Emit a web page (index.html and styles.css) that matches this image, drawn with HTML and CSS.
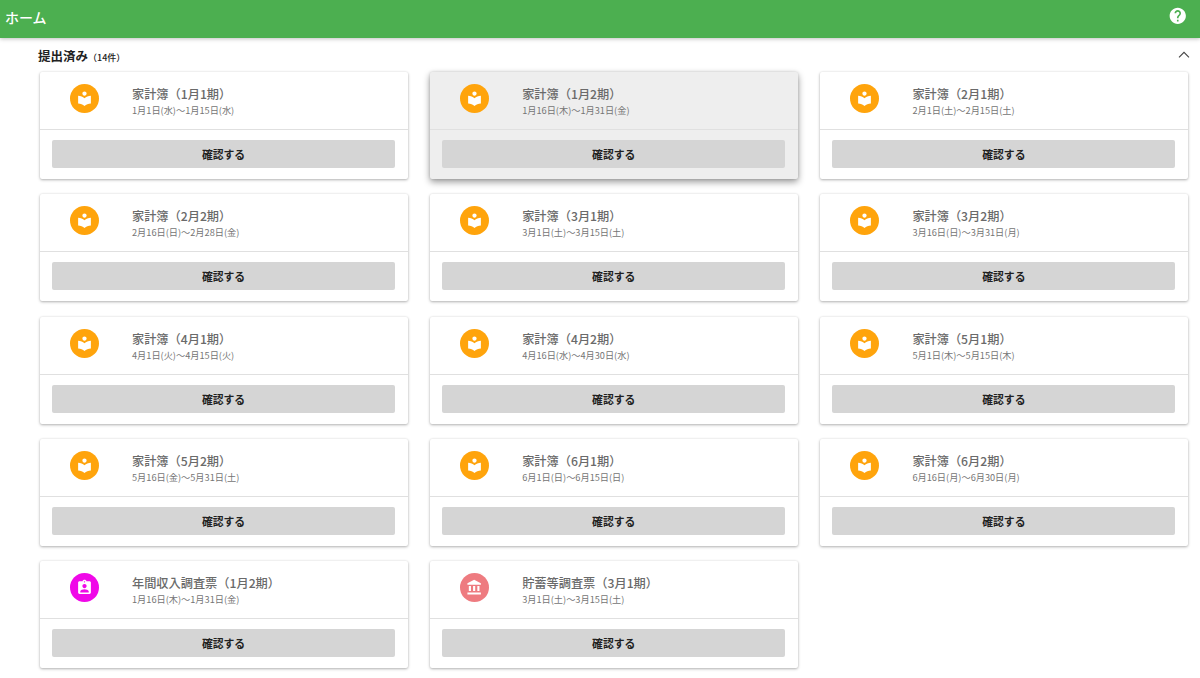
FILE: index.html
```html
<!DOCTYPE html>
<html lang="ja">
<head>
<meta charset="utf-8">
<title>ホーム</title>
<link rel="stylesheet" href="styles.css">
</head>
<body>
<svg class="defs" width="0" height="0" aria-hidden="true">
  <symbol id="i-book" viewBox="0 0 24 24"><path d="M12 11.55C9.64 9.35 6.48 8 3 8v11c3.48 0 6.64 1.35 9 3.55 2.36-2.19 5.52-3.55 9-3.55V8c-3.48 0-6.64 1.35-9 3.55zM12 8c1.66 0 3-1.34 3-3s-1.34-3-3-3-3 1.34-3 3 1.34 3 3 3z"/></symbol>
  <symbol id="i-ind" viewBox="0 0 24 24"><path d="M19 3h-4.18C14.4 1.84 13.3 1 12 1c-1.3 0-2.4.84-2.82 2H5c-1.1 0-2 .9-2 2v14c0 1.1.9 2 2 2h14c1.1 0 2-.9 2-2V5c0-1.1-.9-2-2-2zm-7 0c.55 0 1 .45 1 1s-.45 1-1 1-1-.45-1-1 .45-1 1-1zm0 4c1.66 0 3 1.34 3 3s-1.34 3-3 3-3-1.34-3-3 1.34-3 3-3zm6 12H6v-1.4c0-2 4-3.1 6-3.1s6 1.1 6 3.1V19z"/></symbol>
  <symbol id="i-bank" viewBox="0 0 24 24"><path d="M4 10v7h3v-7H4zm6 0v7h3v-7h-3zM2 22h19v-3H2v3zm14-12v7h3v-7h-3zm-4.5-9L2 6v2h19V6l-9.5-5z"/></symbol>
</svg>
<header class="appbar">
  <span class="appbar-title">ホーム</span>
  <svg class="help" viewBox="0 0 24 24"><path d="M12 2C6.48 2 2 6.48 2 12s4.48 10 10 10 10-4.48 10-10S17.52 2 12 2zm1 17h-2v-2h2v2zm2.07-7.75l-.9.92C13.45 12.9 13 13.5 13 15h-2v-.5c0-1.1.45-2.1 1.17-2.83l1.24-1.26c.37-.36.59-.86.59-1.41 0-1.1-.9-2-2-2s-2 .9-2 2H8c0-2.21 1.79-4 4-4s4 1.79 4 4c0 .88-.36 1.68-.93 2.25z"/></svg>
</header>
<main class="content">
  <div class="section-head">
    <h2 class="section-title">提出済み<small class="count">（14件）</small></h2>
    <svg class="chevron" viewBox="0 0 24 24"><path d="M4.5 15.5 12 8l7.5 7.5"/></svg>
  </div>
  <div class="grid">
    <article class="card"><div class="card-top"><span class="badge orange"><svg class="ico"><use href="#i-book"/></svg></span><div class="card-text"><div class="card-title">家計簿（1月1期）</div><div class="card-date">1月1日(水)〜1月15日(水)</div></div></div><div class="card-actions"><button class="confirm">確認する</button></div></article>
    <article class="card hover"><div class="card-top"><span class="badge orange"><svg class="ico"><use href="#i-book"/></svg></span><div class="card-text"><div class="card-title">家計簿（1月2期）</div><div class="card-date">1月16日(木)〜1月31日(金)</div></div></div><div class="card-actions"><button class="confirm">確認する</button></div></article>
    <article class="card"><div class="card-top"><span class="badge orange"><svg class="ico"><use href="#i-book"/></svg></span><div class="card-text"><div class="card-title">家計簿（2月1期）</div><div class="card-date">2月1日(土)〜2月15日(土)</div></div></div><div class="card-actions"><button class="confirm">確認する</button></div></article>
    <article class="card"><div class="card-top"><span class="badge orange"><svg class="ico"><use href="#i-book"/></svg></span><div class="card-text"><div class="card-title">家計簿（2月2期）</div><div class="card-date">2月16日(日)〜2月28日(金)</div></div></div><div class="card-actions"><button class="confirm">確認する</button></div></article>
    <article class="card"><div class="card-top"><span class="badge orange"><svg class="ico"><use href="#i-book"/></svg></span><div class="card-text"><div class="card-title">家計簿（3月1期）</div><div class="card-date">3月1日(土)〜3月15日(土)</div></div></div><div class="card-actions"><button class="confirm">確認する</button></div></article>
    <article class="card"><div class="card-top"><span class="badge orange"><svg class="ico"><use href="#i-book"/></svg></span><div class="card-text"><div class="card-title">家計簿（3月2期）</div><div class="card-date">3月16日(日)〜3月31日(月)</div></div></div><div class="card-actions"><button class="confirm">確認する</button></div></article>
    <article class="card"><div class="card-top"><span class="badge orange"><svg class="ico"><use href="#i-book"/></svg></span><div class="card-text"><div class="card-title">家計簿（4月1期）</div><div class="card-date">4月1日(火)〜4月15日(火)</div></div></div><div class="card-actions"><button class="confirm">確認する</button></div></article>
    <article class="card"><div class="card-top"><span class="badge orange"><svg class="ico"><use href="#i-book"/></svg></span><div class="card-text"><div class="card-title">家計簿（4月2期）</div><div class="card-date">4月16日(水)〜4月30日(水)</div></div></div><div class="card-actions"><button class="confirm">確認する</button></div></article>
    <article class="card"><div class="card-top"><span class="badge orange"><svg class="ico"><use href="#i-book"/></svg></span><div class="card-text"><div class="card-title">家計簿（5月1期）</div><div class="card-date">5月1日(木)〜5月15日(木)</div></div></div><div class="card-actions"><button class="confirm">確認する</button></div></article>
    <article class="card"><div class="card-top"><span class="badge orange"><svg class="ico"><use href="#i-book"/></svg></span><div class="card-text"><div class="card-title">家計簿（5月2期）</div><div class="card-date">5月16日(金)〜5月31日(土)</div></div></div><div class="card-actions"><button class="confirm">確認する</button></div></article>
    <article class="card"><div class="card-top"><span class="badge orange"><svg class="ico"><use href="#i-book"/></svg></span><div class="card-text"><div class="card-title">家計簿（6月1期）</div><div class="card-date">6月1日(日)〜6月15日(日)</div></div></div><div class="card-actions"><button class="confirm">確認する</button></div></article>
    <article class="card"><div class="card-top"><span class="badge orange"><svg class="ico"><use href="#i-book"/></svg></span><div class="card-text"><div class="card-title">家計簿（6月2期）</div><div class="card-date">6月16日(月)〜6月30日(月)</div></div></div><div class="card-actions"><button class="confirm">確認する</button></div></article>
    <article class="card"><div class="card-top"><span class="badge magenta"><svg class="ico"><use href="#i-ind"/></svg></span><div class="card-text"><div class="card-title">年間収入調査票（1月2期）</div><div class="card-date">1月16日(木)〜1月31日(金)</div></div></div><div class="card-actions"><button class="confirm">確認する</button></div></article>
    <article class="card"><div class="card-top"><span class="badge rose"><svg class="ico"><use href="#i-bank"/></svg></span><div class="card-text"><div class="card-title">貯蓄等調査票（3月1期）</div><div class="card-date">3月1日(土)〜3月15日(土)</div></div></div><div class="card-actions"><button class="confirm">確認する</button></div></article>
  </div>
</main>
</body>
</html>
```

FILE: styles.css
```css
* { box-sizing: border-box; }
html, body { margin: 0; padding: 0; }
body {
  width: 1200px;
  height: 678px;
  overflow: hidden;
  background: #fff;
  font-family: "Noto Sans CJK JP", "Noto Sans", sans-serif;
  color: #212121;
}
.defs { display: block; height: 0; }
.appbar {
  height: 38px;
  background: #4caf50;
  display: flex;
  align-items: center;
  justify-content: space-between;
  padding: 0 13px 5px 5px;
  box-shadow: 0 1px 4px rgba(0,0,0,.25);
  position: relative;
}
.appbar-title { color: #fff; font-size: 14px; font-weight: 500; }
.help { width: 19.5px; height: 19.5px; fill: #fff; margin-top: -1px; }
.content { padding: 0 12px 0 40px; }
.section-head {
  height: 34px;
  display: flex;
  align-items: center;
  justify-content: space-between;
}
.section-title {
  margin: 0 0 0 -2px;
  font-size: 12.5px;
  font-weight: 700;
}
.count { font-size: 9px; font-weight: 500; }
.chevron {
  width: 16px;
  height: 16px;
  fill: none;
  stroke: #444;
  stroke-width: 1.6;
  margin-top: -1px;
  margin-right: -4px;
}
.grid {
  display: grid;
  grid-template-columns: repeat(3, 368px);
  column-gap: 22.2px;
  row-gap: 15.3px;
}
.card {
  height: 107px;
  background: #fff;
  border-radius: 2px;
  box-shadow: 0 1px 3px rgba(0,0,0,.3), 0 0 2px rgba(0,0,0,.08);
}
.card.hover {
  background: #eee;
  box-shadow: 0 3px 7px rgba(0,0,0,.4), 0 0 3px rgba(0,0,0,.15);
}
.card-top {
  height: 58px;
  display: flex;
  align-items: center;
  padding: 0 0 4px 30px;
  border-bottom: 1px solid #e0e0e0;
}
.badge {
  width: 29px;
  height: 29px;
  border-radius: 50%;
  display: flex;
  align-items: center;
  justify-content: center;
  flex: none;
}
.orange { background: #ffa40c; }
.magenta { background: #f008e8; }
.rose { background: #ee7b80; }
.ico { width: 17px; height: 17px; fill: #fff; }
.card-text { margin-left: 33px; padding-top: 6px; }
.card-title {
  font-size: 12.2px;
  font-weight: 500;
  line-height: 17px;
  color: #6a6a6a;
}
.card-date {
  font-size: 9.2px;
  line-height: 13px;
  margin-top: 1px;
  color: #757575;
}
.card-actions { padding: 10px 13px 0 12px; }
.confirm {
  display: block;
  width: 100%;
  height: 28px;
  border: 0;
  border-radius: 2px;
  background: #d5d5d5;
  color: #212121;
  font-family: inherit;
  font-size: 10.8px;
  font-weight: 700;
  padding: 0;
}
```
